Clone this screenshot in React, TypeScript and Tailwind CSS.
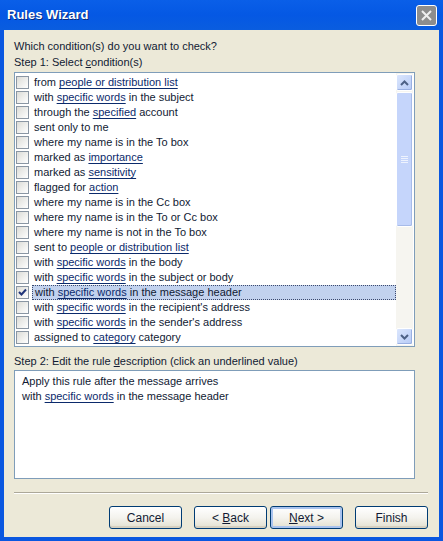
import React from "react";

type Part = { text: string; link?: boolean };

const CONDITIONS: Part[][] = [
  [{ text: "from " }, { text: "people or distribution list", link: true }],
  [{ text: "with " }, { text: "specific words", link: true }, { text: " in the subject" }],
  [{ text: "through the " }, { text: "specified", link: true }, { text: " account" }],
  [{ text: "sent only to me" }],
  [{ text: "where my name is in the To box" }],
  [{ text: "marked as " }, { text: "importance", link: true }],
  [{ text: "marked as " }, { text: "sensitivity", link: true }],
  [{ text: "flagged for " }, { text: "action", link: true }],
  [{ text: "where my name is in the Cc box" }],
  [{ text: "where my name is in the To or Cc box" }],
  [{ text: "where my name is not in the To box" }],
  [{ text: "sent to " }, { text: "people or distribution list", link: true }],
  [{ text: "with " }, { text: "specific words", link: true }, { text: " in the body" }],
  [{ text: "with " }, { text: "specific words", link: true }, { text: " in the subject or body" }],
  [{ text: "with " }, { text: "specific words", link: true }, { text: " in the message header" }],
  [{ text: "with " }, { text: "specific words", link: true }, { text: " in the recipient's address" }],
  [{ text: "with " }, { text: "specific words", link: true }, { text: " in the sender's address" }],
  [{ text: "assigned to " }, { text: "category", link: true }, { text: " category" }],
];

const CHECKED = 14;

// single wrapping span so spaces survive inside flex rows
const Parts = ({ parts }: { parts: Part[] }) => (
  <span className="whitespace-pre">
    {parts.map((p, i) =>
      p.link ? (
        <span key={i} className="underline underline-offset-[2px] text-[#0b2a6b]">
          {p.text}
        </span>
      ) : (
        <React.Fragment key={i}>{p.text}</React.Fragment>
      )
    )}
  </span>
);

const Checkbox = ({ checked }: { checked: boolean }) => (
  <div className="w-[13px] h-[13px] shrink-0 border border-[#8a96a3] bg-gradient-to-br from-[#dcdcd7] to-white flex items-center justify-center">
    {checked && (
      <svg width="9" height="9" viewBox="0 0 9 9">
        <path d="M1 4 L3.5 6.5 L8 1.5" stroke="#21357a" strokeWidth="2" fill="none" />
      </svg>
    )}
  </div>
);

const Arrow = ({ up }: { up: boolean }) => (
  <div className="w-[17px] h-[17px] rounded-[2px] border border-white bg-gradient-to-br from-[#dbe6fd] to-[#b7cbf6] shadow-[inset_-1px_-1px_0_#9ab0e2] flex items-center justify-center">
    <svg width="9" height="6" viewBox="0 0 9 6">
      <path
        d={up ? "M1 5 L4.5 1.5 L8 5" : "M1 1 L4.5 4.5 L8 1"}
        stroke="#4d6185"
        strokeWidth="2"
        fill="none"
      />
    </svg>
  </div>
);

const Button = ({
  children,
  focused,
}: {
  children: React.ReactNode;
  focused?: boolean;
}) => (
  <button
    className={
      "w-[73px] h-[23px] rounded-[3px] border border-[#003c74] bg-gradient-to-b from-white via-[#f4f3ee] to-[#e3e0d0] text-[12px] text-[#111a33] flex items-center justify-center whitespace-pre " +
      (focused ? "shadow-[inset_0_0_0_2px_#a9c3ee]" : "shadow-[inset_0_-2px_0_#d6d0c0]")
    }
  >
    {children}
  </button>
);

export default function App() {
  return (
    <div
      className="w-[443px] h-[541px] bg-[#0a57e0] flex flex-col text-[11px] text-[#111a33]"
      style={{ fontFamily: '"Liberation Sans", Arial, sans-serif' }}
    >
      {/* Title bar */}
      <div className="h-[30px] shrink-0 flex items-center justify-between pl-[7px] pr-[6px] bg-gradient-to-b from-[#0a5fe8] via-[#0558e4] to-[#0a5ddf]">
        <span className="text-white font-bold text-[13px] [text-shadow:1px_1px_0_#0a2a7a]">
          Rules Wizard
        </span>
        <div className="w-[21px] h-[21px] rounded-[3px] border border-white bg-[#8d8d8d] flex items-center justify-center">
          <svg width="13" height="13" viewBox="0 0 13 13">
            <path d="M2 2 L11 11 M11 2 L2 11" stroke="#eeeeee" strokeWidth="2" />
          </svg>
        </div>
      </div>

      {/* Body */}
      <div className="flex-1 mx-[4px] mb-[4px] bg-[#ece9d8] pl-[10px] pt-[9px] flex flex-col">
        <div className="leading-[14px]">Which condition(s) do you want to check?</div>
        <div className="leading-[14px] mt-[2px]">
          Step 1: Select <span className="underline">c</span>ondition(s)
        </div>

        {/* Condition list */}
        <div className="mt-[3px] w-[401px] h-[275px] border border-[#7f9db9] bg-white flex">
          <div className="flex-1 pt-[2px] pl-[1px]">
            {CONDITIONS.map((parts, i) => (
              <div key={i} className="h-[15px] flex items-center">
                <Checkbox checked={i === CHECKED} />
                <div
                  className={
                    "ml-[3px] h-[15px] flex items-center pl-[2px] " +
                    (i === CHECKED
                      ? "flex-1 bg-[#c2d2ee] border border-dotted border-[#3c4a6e]"
                      : "")
                  }
                >
                  <Parts parts={parts} />
                </div>
              </div>
            ))}
          </div>
          {/* Scrollbar */}
          <div className="w-[17px] bg-[#f6f5f0] flex flex-col pt-[1px] pb-[1px] mr-[1px]">
            <Arrow up />
            <div className="flex-1 pt-[1px]">
              <div className="h-[135px] rounded-[2px] border border-white bg-[#c5d5fb] shadow-[inset_-1px_-1px_0_#a7bbe9] flex items-center justify-center">
                <div className="flex flex-col gap-[1px]">
                  <div className="w-[7px] h-[1px] bg-[#eef3fe]" />
                  <div className="w-[7px] h-[1px] bg-[#eef3fe]" />
                  <div className="w-[7px] h-[1px] bg-[#eef3fe]" />
                  <div className="w-[7px] h-[1px] bg-[#eef3fe]" />
                </div>
              </div>
            </div>
            <Arrow up={false} />
          </div>
        </div>

        <div className="leading-[14px] mt-[7px]">
          Step 2: Edit the rule <span className="underline">d</span>escription (click an underlined value)
        </div>

        {/* Description */}
        <div className="mt-[2px] w-[401px] h-[109px] border border-[#7f9db9] bg-white pl-[7px] pt-[3px] leading-[15px]">
          <div>Apply this rule after the message arrives</div>
          <div>
            <Parts
              parts={[
                { text: "with " },
                { text: "specific words", link: true },
                { text: " in the message header" },
              ]}
            />
          </div>
        </div>

        {/* Separator */}
        <div className="mt-[13px] w-[414px] h-[2px] border-t border-[#aca899] border-b border-b-white" />

        {/* Buttons */}
        <div className="mt-[12px] w-[414px] flex justify-end">
          <Button>Cancel</Button>
          <div className="w-[12px]" />
          <Button>
            &lt; <span className="underline">B</span>ack
          </Button>
          <div className="w-[3px]" />
          <Button focused>
            <span className="underline">N</span>ext &gt;
          </Button>
          <div className="w-[12px]" />
          <Button>Finish</Button>
        </div>
      </div>
    </div>
  );
}
